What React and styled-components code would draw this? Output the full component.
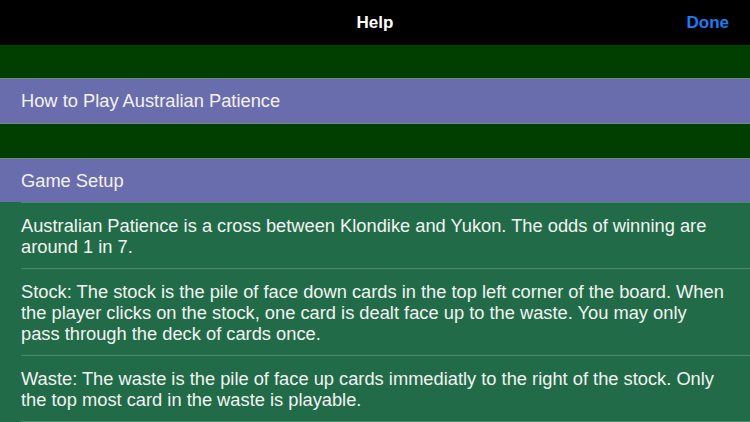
import React from 'react';
import styled, { createGlobalStyle } from 'styled-components';

const GlobalStyle = createGlobalStyle`
  html, body {
    margin: 0;
    padding: 0;
    background: #226b48;
    font-family: "Liberation Sans", Arial, sans-serif;
    -webkit-font-smoothing: antialiased;
  }
`;

const Screen = styled.div`
  width: 750px;
  height: 422px;
  overflow: hidden;
  background: #226b48;
  display: flex;
  flex-direction: column;
`;

const NavBar = styled.div`
  height: 45px;
  flex-shrink: 0;
  background: #000;
  display: grid;
  grid-template-columns: 1fr auto 1fr;
  align-items: center;
  padding: 0 21px;
`;

const NavTitle = styled.div`
  color: #fff;
  font-size: 17px;
  font-weight: 700;
  grid-column: 2;
`;

const NavButton = styled.button`
  grid-column: 3;
  justify-self: end;
  background: none;
  border: none;
  padding: 0;
  color: #1b7cf4;
  font-family: inherit;
  font-size: 17px;
  font-weight: 700;
  cursor: pointer;
`;

const Spacer = styled.div`
  height: ${p => p.h}px;
  flex-shrink: 0;
  background: #003f00;
  border-bottom: 1px solid #6f8a82;
`;

const SectionHeader = styled.div`
  height: ${p => p.h}px;
  flex-shrink: 0;
  background: #6a6dad;
  color: #f2f2f4;
  font-size: 18.3px;
  display: flex;
  align-items: center;
  padding: 0 21px;
  border-bottom: ${p => (p.last ? 'none' : '1px solid #6f8a82')};
`;

const Row = styled.div`
  margin-left: 21px;
  padding: 12px 21px 11px 0;
  color: #f1f4f2;
  font-size: 18.3px;
  line-height: 21px;
  border-top: 1px solid #4d8a6b;

  &:last-child {
    border-bottom: 1px solid #4d8a6b;
  }
`;

const sections = [
  'Australian Patience is a cross between Klondike and Yukon. The odds of winning are around 1 in 7.',
  'Stock: The stock is the pile of face down cards in the top left corner of the board. When the player clicks on the stock, one card is dealt face up to the waste. You may only pass through the deck of cards once.',
  'Waste: The waste is the pile of face up cards immediatly to the right of the stock. Only the top most card in the waste is playable.'
];

export default function App() {
  return (
    <>
      <GlobalStyle />
      <Screen>
        <NavBar>
          <NavTitle>Help</NavTitle>
          <NavButton>Done</NavButton>
        </NavBar>
        <Spacer h={33} />
        <SectionHeader h={44}>How to Play Australian Patience</SectionHeader>
        <Spacer h={34} />
        <SectionHeader h={43} last>Game Setup</SectionHeader>
        <div>
          {sections.map(text => (
            <Row key={text}>{text}</Row>
          ))}
        </div>
      </Screen>
    </>
  );
}
